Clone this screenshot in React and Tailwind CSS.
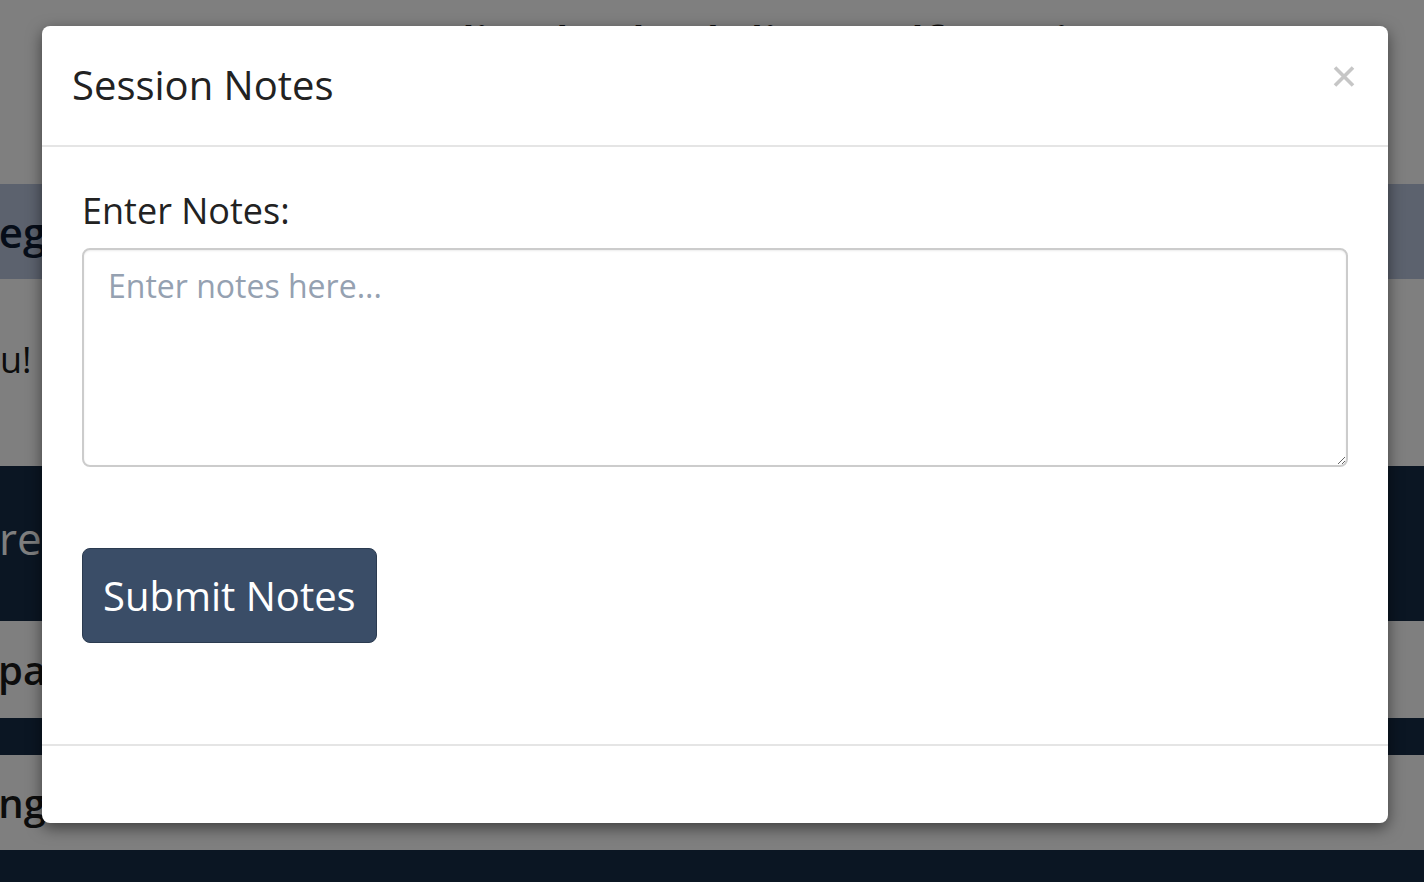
import React, { useState } from "react";

const font = { fontFamily: '"Open Sans", "Noto Sans", sans-serif' };

function CloseIcon() {
  return (
    <svg width="24" height="23" viewBox="0 0 24 23" fill="none">
      <path d="M3 2.5L21 20.5M21 2.5L3 20.5" stroke="#c6c6c6" strokeWidth="3.6" />
    </svg>
  );
}

// page that sits behind the dimmed overlay
function BackPage() {
  return (
    <div className="w-full overflow-hidden">
      <div className="h-[184px] bg-white pt-[15px] text-center">
        <h1 className="text-[48px] leading-[58px] font-semibold text-[#1a1a1a]">
          Personalized Scheduling Golf Sessions
        </h1>
      </div>
      <div className="h-[95px] bg-[#b8c4dc] flex items-center">
        <h2 className="-ml-[28px] text-[42px] font-semibold text-[#0d1b33] whitespace-nowrap">
          Register Now
        </h2>
      </div>
      <div className="h-[187px] bg-white pt-[54px]">
        <p className="-ml-[152px] text-[36px] leading-[54px] text-[#1a1a1a] whitespace-nowrap">Thank you!</p>
      </div>
      <div className="h-[155px] bg-[#162c46] pt-[39px]">
        <p className="-ml-[113px] text-[44px] leading-[66px] text-white whitespace-nowrap">Explore more</p>
      </div>
      <div className="h-[97px] bg-white flex items-center">
        <p className="-ml-[2px] text-[40px] font-semibold text-[#1a1a1a] whitespace-nowrap">pairings</p>
      </div>
      <div className="h-[37px] bg-[#162c46]" />
      <div className="h-[95px] bg-white flex items-center">
        <p className="-ml-[111px] text-[40px] font-semibold text-[#1a1a1a] whitespace-nowrap">Booking</p>
      </div>
      <div className="h-[60px] bg-[#162c46]" />
    </div>
  );
}

export default function App() {
  const [notes, setNotes] = useState("");

  return (
    <div className="relative h-[882px] overflow-hidden bg-white" style={font}>
      <BackPage />
      <div className="absolute inset-0 bg-black/50" />

      <div className="absolute left-[42px] top-[26px] w-[1346px] bg-white rounded-lg shadow-[0_5px_15px_rgba(0,0,0,0.5)]">
        <div className="h-[121px] border-b-2 border-[#e5e5e5] flex items-center justify-between pl-[30px] pr-[32px]">
          <h4 className="text-[40px] leading-[60px] text-[#222] mt-[-2px]">Session Notes</h4>
          <button className="self-start mt-[39px]">
            <CloseIcon />
          </button>
        </div>

        <div className="h-[597px] px-[40px] pt-[38px]">
          <label className="block text-[36px] leading-[52px] text-[#222]">Enter Notes:</label>
          <textarea
            value={notes}
            onChange={(e) => setNotes(e.target.value)}
            placeholder="Enter notes here..."
            className="block mt-[11px] w-full h-[219px] border-2 border-[#cccccc] rounded-lg px-[24px] py-[12px] text-[32px] leading-[48px] text-[#222] placeholder:text-[#95a1b1] shadow-[inset_0_1px_2px_rgba(0,0,0,0.075)] outline-none"
          />
          <button className="mt-[81px] h-[95px] px-[20px] bg-[#3a4d67] border border-[#2b3b50] rounded-lg text-white text-[40px] leading-[60px]">
            Submit Notes
          </button>
        </div>

        <div className="h-[79px] border-t-2 border-[#e5e5e5]" />
      </div>
    </div>
  );
}
